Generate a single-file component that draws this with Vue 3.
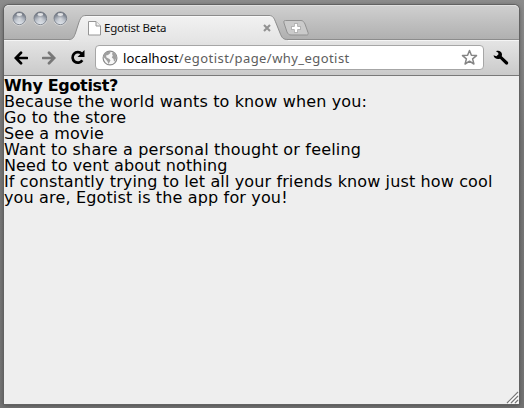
<script setup>
const lines = [
  { text: 'Because the world wants to know when you:', space: 0.13 },
  { text: 'Go to the store', space: 0.13 },
  { text: 'See a movie', space: 0.08 },
  { text: 'Want to share a personal thought or feeling', space: 0.17 },
  { text: 'Need to vent about nothing', space: 0.09 },
  { text: 'If constantly trying to let all your friends know just how cool', space: 0.125 },
  { text: 'you are, Egotist is the app for you!', space: 0.15 },
]
</script>

<template>
  <div class="desktop">
    <div class="window">
      <header class="tabstrip">
        <div class="lights">
          <svg v-for="n in 3" :key="n" width="15" height="15" viewBox="0 0 15 15">
            <defs>
              <linearGradient :id="'l' + n" x1="0" y1="0" x2="0" y2="1">
                <stop offset="0" stop-color="#626873" /><stop offset=".45" stop-color="#9299a5" /><stop offset="1" stop-color="#e5ebf2" />
              </linearGradient>
              <radialGradient :id="'r' + n"><stop offset="0" stop-color="#fff" stop-opacity=".55" /><stop offset="1" stop-color="#fff" stop-opacity="0" /></radialGradient>
            </defs>
            <circle cx="7.5" cy="8" r="7" fill="#e3e3e3" />
            <circle cx="7.5" cy="7.3" r="6.5" :fill="`url(#l${n})`" stroke="#747a84" stroke-width=".9" />
            <circle cx="7.5" cy="8" r="5.5" :fill="`url(#r${n})`" />
            <ellipse cx="7.5" cy="3.4" rx="3" ry="1.5" fill="#fff" opacity=".75" />
          </svg>
        </div>
        <div class="tab">
          <svg class="tab-shape" width="226" height="27" viewBox="0 0 226 27">
            <defs>
              <linearGradient id="tabfill" x1="0" y1="0" x2="0" y2="1"><stop offset="0" stop-color="#f2f2f2" /><stop offset="1" stop-color="#e4e4e4" /></linearGradient>
            </defs>
            <path d="M4 24.500C8 24.500 9 22 10.500 18L14 7C16 2 17 .5 21 .5H204C208 .5 209 3 211 8L215 18C217 23 218 24.500 223 24.500V27H4Z" fill="url(#tabfill)" transform="translate(-3 0)" />
            <path d="M4 24.500C8 24.500 9 22 10.500 18L14 7C16 2 17 .5 21 .5H204C208 .5 209 3 211 8L215 18C217 23 218 24.500 223 24.500" fill="none" stroke="#8c8c8c" transform="translate(-3 0)" />
            <path d="M18 1.500H202" stroke="#fafafa" />
          </svg>
          <svg class="page-icon" width="13" height="15" viewBox="0 0 13 15">
            <path d="M.5.5H8L12.500 5V14H.5Z" fill="#fff" stroke="#969696" />
            <path d="M8 .5V5H12.500" fill="#eee" stroke="#969696" />
          </svg>
          <span class="tab-title">Egotist Beta</span>
          <svg class="close" width="8" height="8" viewBox="0 0 8 8"><path d="M1 1L7 7M7 1L1 7" stroke="#929292" stroke-width="2.100" /></svg>
        </div>
        <svg class="newtab" width="28" height="18" viewBox="0 0 28 18">
          <path d="M3.500 1.500H19C21 1.500 22 3 23 5L26 13.500C26.500 15.500 26 16 24.500 16H9C7 16 6 15 5 13L2 4C1.500 2 2 1.500 3.500 1.500Z" fill="#cacaca" stroke="#919191" />
          <path d="M14 4.500V13.500M9.500 9H18.500" stroke="#9b9b9b" stroke-width="4" />
          <path d="M14 5V13M10 9H18" stroke="#fff" stroke-width="2.600" />
        </svg>
      </header>

      <nav class="toolbar">
        <svg class="back" width="14" height="14" viewBox="0 0 14 14"><path d="M13 7H2M7 1.800L1.800 7L7 12.200" fill="none" stroke="#000" stroke-width="2.700" stroke-linecap="round" /></svg>
        <svg class="forward" width="14" height="14" viewBox="0 0 14 14"><path d="M1 7H12M7 1.800L12.200 7L7 12.200" fill="none" stroke="#777" stroke-width="2.700" stroke-linecap="round" /></svg>
        <svg class="reload" width="16" height="15" viewBox="0 0 16 15"><path d="M11.700 3.700A5.300 5.300 0 1 0 12.300 10.300" fill="none" stroke="#000" stroke-width="2.700" /><path d="M14.500 0V7H7.500Z" fill="#000" /></svg>
        <div class="omnibox">
          <svg class="globe" width="16" height="16" viewBox="0 0 16 16">
            <circle cx="8" cy="8" r="6.900" fill="#f7f7f7" stroke="#8c8c8c" stroke-width="1.200" />
            <path d="M2 4.500L4.500 1.800L8 1.500L8.500 3L6 5L4 5.500L4.500 7.500L7.500 9L8.500 10.500L6.500 14L5.500 11.500L3.500 9L1.500 7Z" fill="#a0a0a0" />
            <path d="M11 2L13.500 4L14.500 7.500L13 11L12 11.500L11.500 9L9.800 7.500L10.800 5.500L10 4Z" fill="#a0a0a0" />
          </svg>
          <span class="url"><b>localhost</b>/egotist/page/why_egotist</span>
          <svg class="star" width="17" height="17" viewBox="0 0 17 17"><path d="M8.500 1.500L10.400 6.300L15.500 6.600L11.600 9.900L12.900 15L8.500 12.200L4.100 15L5.400 9.900L1.500 6.600L6.600 6.300Z" fill="#fff" stroke="#858585" stroke-width="1.500" stroke-linejoin="round" /></svg>
        </div>
        <svg class="wrench" width="16" height="16" viewBox="0 0 16 16"><path d="M3 1.200C5.500 0 8.700 1.200 9 4.200L8.800 6.300L14.700 11.800C16.200 13.400 14.200 15.600 12.500 14.200L7 8.800C4 9.700 1 8.500 .5 5.300L3.400 6.200L5.500 4.200L5.200 2.700Z" fill="#000" /></svg>
      </nav>

      <main class="page">
        <h1>Why Egotist?</h1>
        <p v-for="line in lines" :key="line.text" :style="{ letterSpacing: line.space + 'px' }">{{ line.text }}</p>
        <svg class="grip" width="13" height="13" viewBox="0 0 13 13">
          <path d="M2 12L12 2M6 12L12 6M10 12L12 10" stroke="#fff" stroke-width="2.500" />
          <path d="M1 12L12 1M5 12L12 5M9 12L12 9" stroke="#777" stroke-width="1.200" />
        </svg>
      </main>
    </div>
  </div>
</template>

<style>
body { margin: 0; }
</style>

<style scoped>
.desktop { box-sizing: border-box; width: 524px; height: 408px; padding: 5px 5px 4px 4px; background: linear-gradient(#8b8b8b, #777 35%, #737373); overflow: hidden; }
.window { display: flex; flex-direction: column; height: 399px; border-radius: 5px 5px 0 0; box-shadow: 0 0 0 1px #626262, 0 1px 4px #444; background: #eee; }
.tabstrip { box-sizing: border-box; height: 35px; display: flex; flex: none; align-items: flex-start; border-radius: 5px 5px 0 0; border-top: 1px solid #e0e0e0; border-bottom: 1px solid #8c8c8c; background: linear-gradient(#cfcfcf, #b0b0b0); }
.lights { box-sizing: border-box; display: flex; gap: 6px; padding: 5px 0 0 8px; width: 64px; flex: none; }
.tab { position: relative; box-sizing: border-box; display: flex; align-items: center; width: 212px; height: 25px; margin-top: 9px; padding: 1px 9px 0 20px; }
.tab-shape { position: absolute; left: 0; top: 0; }
.page-icon, .tab-title, .close { position: relative; flex: none; }
.tab-title { margin-left: 3px; font: 11.500px "Noto Sans", sans-serif; line-height: 18px; letter-spacing: -.2px; color: #111; }
.close { margin-left: auto; }
.newtab { margin: 13px 0 0 2px; position: relative; }
.toolbar { box-sizing: border-box; height: 36px; flex: none; display: flex; align-items: center; padding: 0 9px 1px 10px; border-top: 1px solid #f5f5f5; border-bottom: 1px solid #797979; background: linear-gradient(#e4e4e4, #cacaca); }
.toolbar > svg { flex: none; }
.forward { margin-left: 14px; }
.reload { margin-left: 14px; }
.omnibox { box-sizing: border-box; flex: none; display: flex; align-items: center; width: 389px; height: 25px; margin-left: 9px; padding: 0 5px 0 6px; border: 1px solid #a6a6a6; border-radius: 4px; background: #fff; }
.url { margin-left: 5px; font: 13px "Noto Sans", sans-serif; line-height: 18px; color: #5d5d5d; white-space: nowrap; letter-spacing: .43px; }
.url b { font-weight: 400; color: #000; letter-spacing: .1px; }
.star { margin-left: auto; }
.wrench { margin-left: 9px; }
.page { position: relative; flex: 1; padding-top: 2px; font-family: "DejaVu Sans", sans-serif; background: #eee; color: #000; }
h1, p { margin: 0; font-size: 16px; line-height: 16px; white-space: nowrap; }
h1 { font-weight: 700; letter-spacing: -.33px; }
.grip { position: absolute; right: 0; bottom: 0; }
</style>
